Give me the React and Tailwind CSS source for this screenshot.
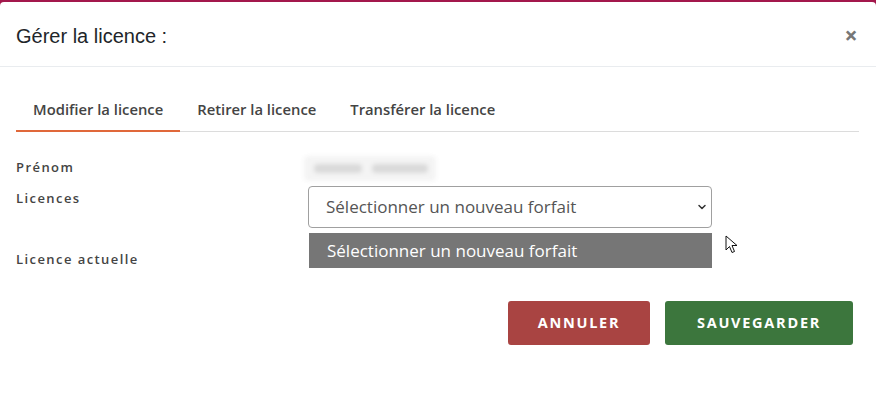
import { ChevronDown } from 'lucide-react'

const tabs = ['Modifier la licence', 'Retirer la licence', 'Transférer la licence']

export default function App() {
  return (
    <div className="h-[401px] w-[876px] overflow-hidden bg-[#a3184c] pt-[2px]">
      <div className="h-full rounded-t-[4px] bg-white">
        <div className="flex h-[65px] items-center justify-between border-b border-[#e9ecef] pl-4 pr-[19px] pt-[4px]">
          <h2 className="text-[20px] text-[#212529]" style={{ fontFamily: '"Liberation Sans", Arial, sans-serif' }}>
            Gérer la licence :
          </h2>
          <span className="text-[22px] font-bold leading-none text-[#777]" style={{ fontFamily: 'Roboto, sans-serif' }}>
            ×
          </span>
        </div>

        <div className="mx-4 mr-[17px] mt-[31px] flex border-b border-[#dcdcdc]" style={{ fontFamily: '"Open Sans", sans-serif' }}>
          {tabs.map((tab, i) => (
            <div
              key={tab}
              className={`-mb-px pb-[10px] text-[14.8px] font-semibold text-[#444] ${
                i === 0 ? 'border-b-2 border-[#e0683a] px-[17px]' : 'border-b-2 border-transparent px-[17px]'
              }`}
            >
              {tab}
            </div>
          ))}
        </div>

        <div className="mx-4 mt-[23px] grid grid-cols-[292px_1fr] text-[13px] font-semibold tracking-[0.11em] text-[#444]" style={{ fontFamily: '"Open Sans", sans-serif' }}>
          <div className="pt-[3px]">Prénom</div>
          <div className="h-[24px]">
            <div className="ml-[-4px] mt-[1px] h-[25px] w-[132px] rounded bg-[#f4f4f4] blur-[2px]">
              <div className="mx-[10px] mt-[8px] inline-block h-[9px] w-[48px] rounded bg-[#dadada]" />
              <div className="mt-[8px] inline-block h-[9px] w-[56px] rounded bg-[#dadada]" />
            </div>
          </div>

          <div className="pt-[10px]">Licences</div>
          <div className="mt-[7px]">
            <div
              className="flex h-[42px] w-[404px] items-center justify-between rounded-[4px] border border-[#a0a0a0] pl-[17px] pr-[3px] text-[17px] font-normal tracking-normal text-[#555]"
              style={{ fontFamily: '"Open Sans", sans-serif' }}
            >
              <span>Sélectionner un nouveau forfait</span>
              <ChevronDown size={12} strokeWidth={3} className="text-[#333]" />
            </div>
            <div className="relative">
              <div
                className="mt-[5px] ml-px flex h-[35px] w-[403px] items-center bg-[#767676] pl-[18px] text-[17px] font-normal tracking-normal text-white"
                style={{ fontFamily: '"Open Sans", sans-serif' }}
              >
                Sélectionner un nouveau forfait
              </div>
              <svg className="absolute left-[417px] top-[2px]" width="14" height="20" viewBox="0 0 14 20">
                <path d="M1 1 L1 15 L4.5 11.5 L7 17.5 L9.5 16.5 L7 10.5 L12 10.5 Z" fill="white" stroke="#111" strokeWidth="1" strokeLinejoin="round" />
              </svg>
            </div>
          </div>

          <div className="-mt-[18px]">Licence actuelle</div>
          <div />
        </div>

        <div className="mr-[23px] mt-[31px] flex justify-end gap-[15px]" style={{ fontFamily: '"Open Sans", sans-serif' }}>
          <button className="h-[44px] w-[142px] rounded-[3px] bg-[#a94442] text-[14.5px] font-bold tracking-[0.12em] text-white">
            ANNULER
          </button>
          <button className="h-[44px] w-[188px] rounded-[3px] bg-[#3c763d] text-[14.5px] font-bold tracking-[0.12em] text-white">
            SAUVEGARDER
          </button>
        </div>
      </div>
    </div>
  )
}
